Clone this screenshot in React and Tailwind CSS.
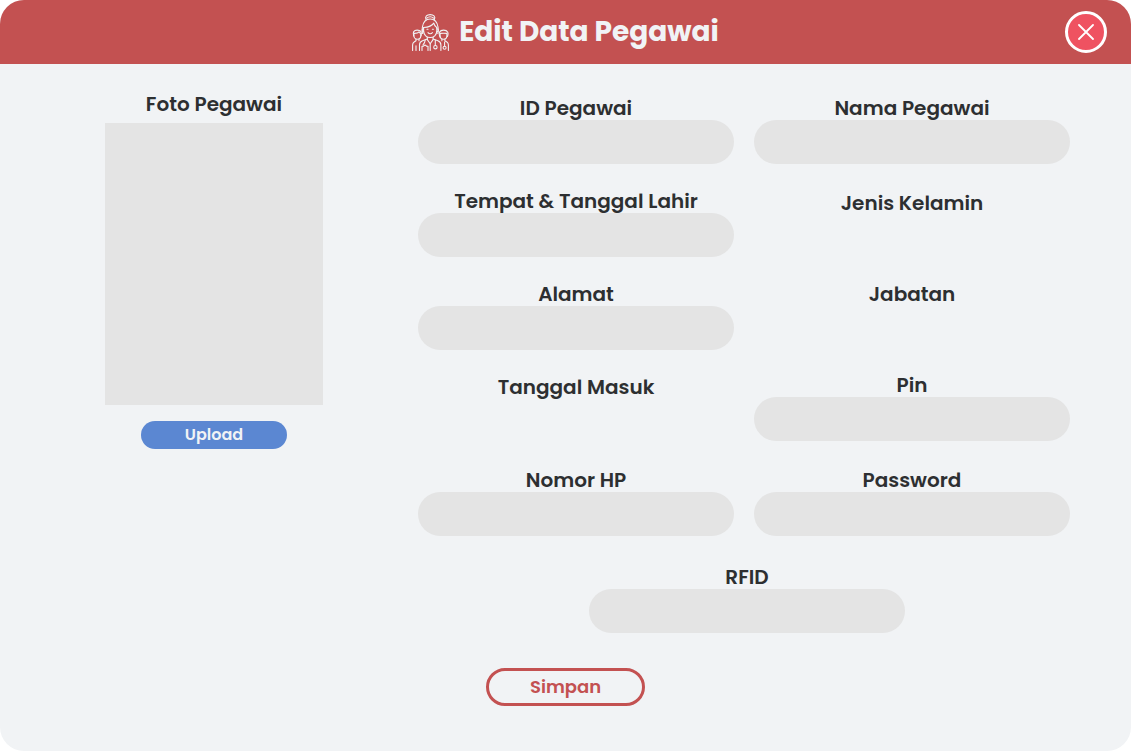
import React from "react";

function StaffIcon() {
  return (
    <svg
      className="size-[37px] shrink-0"
      viewBox="0 0 37 37"
      fill="none"
      stroke="#f1f3f5"
      strokeWidth="1.1"
      strokeLinecap="round"
      strokeLinejoin="round"
      aria-hidden="true"
    >
      {/* central figure: bun, hair, face */}
      <path d="M14 5.600C12.600 2.600 15 .6 18.200.6s5.600 2 4.200 5" />
      <path d="M14.600 4.200c2.200-1.700 5-1.700 7.200 0" />
      <path d="M10.600 19.500c-1-2-.6-4.200-.2-6.500.8-5 3.500-8 7.800-8s7 3 7.800 8c.4 2.300.8 4.500-.2 6.500" />
      <path d="M11.600 13.500c4.500-.3 8.400-1.500 10.200-4.400.5 2.300 1.500 3.600 2.900 4.400" />
      <path d="M11.600 13.500v3.600c0 4 3.200 6.400 6.600 6.400s6.600-2.400 6.600-6.400v-3.600" />
      <path d="M11.500 14.800c-1.700-.2-1.700 3.100.2 3.100M24.900 14.800c1.700-.2 1.700 3.100-.2 3.100" />
      <path d="M15 15.200h1M20.400 15.200h1M16 18.700c1.200 1.400 3.200 1.400 4.400 0" />
      {/* central figure: neck, coat, stethoscope, board */}
      <path d="M15.300 23.200v2.400l2.900 4.200 2.900-4.200v-2.400" />
      <path d="M15.300 25.100l-4.800 1.700c-2 .7-3 2.200-3 4.200v5.500M21.100 25.100l4.800 1.700c2 .7 3 2.200 3 4.200v5.500" />
      <path d="M13.200 26c-.2 2.400-.8 3.500-2.200 4.800M23.300 26v5.500" />
      <circle cx="23.400" cy="33.200" r="1.700" />
      <path d="M10 36.500v-4.300h1.600c.2-1.500 2.600-1.500 2.800 0H16v4.300M18.200 29.800v6.700" />
      {/* left colleague */}
      <path d="M1.700 22c-1.300-3.800.2-5.900 3.500-5.900s4.900 1.500 3.900 5.900" />
      <path d="M1.900 19.400c2.500.1 4.400-.5 5.200-1.500.3.900.9 1.300 1.700 1.500v2c0 2.200-1.600 3.800-3.500 3.800s-3.400-1.600-3.400-3.800z" />
      <path d="M4 25.200v1.500L2.100 28C1 28.700.6 29.700.6 31v5.500M4 36.500v-4.700M7 25.200v1.500" />
      {/* right colleague */}
      <path d="M28 23c-1.700-4-.5-6.900 3.600-6.900s5.300 2.900 3.800 6.400" />
      <path d="M28.100 19.400c2.600-.2 4.700-.2 6.800 0v2c0 2.200-1.500 3.800-3.400 3.800s-3.400-1.600-3.400-3.800z" />
      <path d="M29.900 25.200v1.500M32.900 25.200v1.500l2 1.300c1.100.7 1.500 1.700 1.500 3v5.500M32.600 28v4" />
      <circle cx="32.600" cy="33.700" r="1.500" />
    </svg>
  );
}

const labelClass = "text-center text-xl leading-6 font-semibold text-[#2d2f31]";

function Field({ id, label, type = "text" }) {
  return (
    <div className="flex flex-col">
      <label htmlFor={id} className={labelClass}>
        {label}
      </label>
      <input
        id={id}
        name={id}
        type={type}
        className="h-11 w-full rounded-full bg-[#e4e4e4] px-5 text-base text-[#2d2f31] outline-none"
      />
    </div>
  );
}

function EmptyField({ label, slot }) {
  return (
    <div className="flex flex-col">
      <p className={labelClass}>{label}</p>
      <div className={slot} />
    </div>
  );
}

export default function App() {
  return (
    <div className="min-h-screen bg-white font-['Poppins','Inter',sans-serif]">
      <form
        className="flex min-h-screen flex-col overflow-hidden rounded-3xl bg-[#f1f3f5]"
        onSubmit={(e) => e.preventDefault()}
      >
        <header className="grid h-16 grid-cols-[1fr_auto_1fr] items-center bg-[#c35151] px-6">
          <div />
          <div className="flex items-center gap-2.5">
            <StaffIcon />
            <h1 className="text-[28px] leading-9 font-bold text-[#f1f3f5]">Edit Data Pegawai</h1>
          </div>
          <button
            type="button"
            aria-label="Tutup"
            className="flex size-[42px] items-center justify-center justify-self-end rounded-full border-3 border-white bg-[#ef5261]"
          >
            <svg className="size-4" viewBox="0 0 16 16" stroke="#fff" strokeWidth="1.8" strokeLinecap="round" aria-hidden="true">
              <path d="M1 1l14 14M15 1L1 15" />
            </svg>
          </button>
        </header>

        <main className="flex gap-[95px] pt-7 pr-[61px] pl-[105px]">
          <section className="flex w-[218px] shrink-0 flex-col items-center">
            <h2 className={labelClass}>Foto Pegawai</h2>
            <div className="mt-[7px] h-[282px] w-full bg-[#e4e4e4]" />
            <button
              type="button"
              className="mt-4 h-7 w-[146px] rounded-full bg-[#5b87d2] text-base leading-6 font-semibold text-[#f1f3f5]"
            >
              Upload
            </button>
          </section>

          <section className="flex flex-1 flex-col pt-1">
            <div className="grid grid-cols-2 gap-x-5">
              <div className="flex flex-col gap-[25px]">
                <Field id="id-pegawai" label="ID Pegawai" />
                <Field id="lahir" label="Tempat & Tanggal Lahir" />
                <Field id="alamat" label="Alamat" />
                <EmptyField label="Tanggal Masuk" slot="h-11" />
                <Field id="nomor-hp" label="Nomor HP" type="tel" />
              </div>
              <div className="flex flex-col justify-between">
                <Field id="nama-pegawai" label="Nama Pegawai" />
                <EmptyField label="Jenis Kelamin" slot="h-10" />
                <EmptyField label="Jabatan" slot="h-10" />
                <Field id="pin" label="Pin" />
                <Field id="password" label="Password" type="password" />
              </div>
            </div>
            <div className="mx-auto mt-[29px] w-1/2 pr-0.5 pl-2">
              <Field id="rfid" label="RFID" />
            </div>
          </section>
        </main>

        <button
          type="submit"
          className="mx-auto mt-[35px] mb-11 h-[38px] w-[159px] rounded-full border-3 border-[#c35151] text-lg leading-6 font-semibold text-[#c35151]"
        >
          Simpan
        </button>
      </form>
    </div>
  );
}
